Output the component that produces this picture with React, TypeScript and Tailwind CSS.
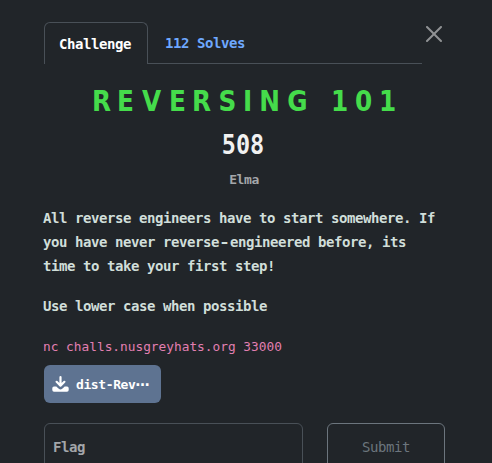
const titleCells: [string, string][] = [
  ["R", "w-[26px]"], ["E", "w-[22px]"], ["V", "w-[30px]"], ["E", "w-[22px]"],
  ["R", "w-[26px]"], ["S", "w-[26px]"], ["I", "w-[14px]"], ["N", "w-[30px]"],
  ["G", "w-[26px]"], [" ", "w-[18px]"], ["1", "w-[22px]"], ["0", "w-[26px]"],
  ["1", "w-[22px]"],
];

function Tabs() {
  return (
    <div className="flex h-[42px] w-[378px] text-[14px] font-bold leading-[43px] tracking-[-0.43px]">
      <div className="w-[104px] rounded-t-md border border-b-0 border-[#495057] pl-[14px] leading-[42px] text-white">
        Challenge
      </div>
      <div className="flex-1 border-b border-[#495057] pl-[17px] text-[#6ea8fe]">
        112 Solves
      </div>
    </div>
  );
}

function CloseIcon() {
  return (
    <svg viewBox="0 0 16 16" className="h-4 w-4 text-[#909294]" fill="currentColor">
      <path d="M.293.293a1 1 0 0 1 1.414 0L8 6.586 14.293.293a1 1 0 1 1 1.414 1.414L9.414 8l6.293 6.293a1 1 0 0 1-1.414 1.414L8 9.414l-6.293 6.293a1 1 0 0 1-1.414-1.414L6.586 8 .293 1.707a1 1 0 0 1 0-1.414z" />
    </svg>
  );
}

function DownloadIcon() {
  return (
    <svg viewBox="0 0 17 16" className="h-4 w-[17px] shrink-0" fill="none" stroke="currentColor" strokeLinecap="round" strokeLinejoin="round">
      <path d="M8.500 1.200V9.500M4.600 5.800l3.900 3.800 3.900-3.800" strokeWidth="2.200" />
      <path d="M2 10.500h2.300l2.500 2.300q1.700 1.400 3.400 0l2.500-2.300H15a1.700 1.700 0 0 1 1.700 1.700v1.800a1.700 1.700 0 0 1-1.700 1.700H2A1.700 1.700 0 0 1 .3 14v-1.800A1.700 1.700 0 0 1 2 10.500z" fill="currentColor" stroke="none" />
    </svg>
  );
}

export default function App() {
  return (
    <main className="h-[463px] w-[492px] overflow-hidden bg-[#212529] pl-11 pt-[22px] font-['DejaVu_Sans_Mono',monospace]">
      <div className="flex">
        <Tabs />
        <button aria-label="Close" className="ml-1 flex h-6 w-4 items-center">
          <CloseIcon />
        </button>
      </div>

      <h1 className="ml-[44.5px] mt-[21px] flex h-8 whitespace-pre font-['DejaVu_Sans_Condensed','DejaVu_Sans',sans-serif] text-[27.5px] font-bold leading-8 text-[#45dc4b] [font-stretch:condensed]">
        {titleCells.map(([letter, width], i) => (
          <span key={i} className={`${width} flex justify-center`}>{letter}</span>
        ))}
      </h1>
      <h2 className="mt-[12px] h-8 w-[398px] origin-center scale-x-[0.87] text-center text-[27px] font-bold leading-8 text-[#f1f1f1]">
        508
      </h2>
      <p className="mt-[9px] h-5 w-[400px] text-center text-[13px] font-bold leading-5 tracking-[-0.4px] text-[#a4a7aa]">
        Elma
      </p>

      <div className="-ml-px mt-4 whitespace-nowrap text-[14px] font-bold leading-6 tracking-[-0.43px] text-[#d0ded9]">
        <p>
          All reverse engineers have to start somewhere. If
          <br />
          you have never reverse<span className="inline-block w-[11px] tracking-normal"><span className="inline-block origin-left scale-x-[1.3]">-</span></span>engineered before, its
          <br />
          time to take your first step!
        </p>
        <p className="mt-4">Use lower case when possible</p>
      </div>
      <code className="-ml-px mt-[17px] block h-6 font-['DejaVu_Sans_Mono',monospace] text-[12.8px] leading-6 text-[#e27fb1]">
        nc challs.nusgreyhats.org 33000
      </code>

      <button className="mt-1.5 flex h-[38px] w-[117px] items-center rounded-md bg-[#5e7391] pl-2 text-[13px] font-bold tracking-[-0.4px] text-white">
        <DownloadIcon />
        <span className="ml-[7px] flex h-5 leading-[21px]">
          dist-Rev<span className="mt-[-3px] font-['DejaVu_Sans',sans-serif] text-[14px]">…</span>
        </span>
      </button>

      <div className="mt-5 flex gap-6 text-[14px] font-bold leading-[46px] tracking-[-0.43px]">
        <div className="h-12 w-[259px] rounded-md border border-[#495057] pl-2 text-[#a3a6a9]">Flag</div>
        <button className="h-12 w-[118px] rounded-md border border-[#6c757d] text-center font-normal text-[#6c757d]">
          Submit
        </button>
      </div>
    </main>
  );
}
